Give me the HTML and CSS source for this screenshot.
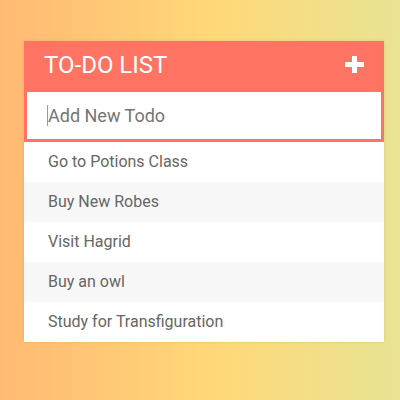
FILE: index.html
```html
<!DOCTYPE html>
<html>
<head>
<meta charset="utf-8">
<link rel="stylesheet" href="styles.css">
</head>
<body>
<div class="container">
  <h1 class="title">To-Do List
    <svg class="plus" width="19" height="17" viewBox="0 0 19 17"><rect x="7" y="0" width="5" height="17" fill="#fff"/><rect x="0" y="6" width="19" height="5" fill="#fff"/></svg>
  </h1>
  <div class="input-wrap"><span class="caret"></span><span class="placeholder">Add New Todo</span></div>
  <ul class="list">
    <li class="item">Go to Potions Class</li>
    <li class="item">Buy New Robes</li>
    <li class="item">Visit Hagrid</li>
    <li class="item">Buy an owl</li>
    <li class="item">Study for Transfiguration</li>
  </ul>
</div>
</body>
</html>
```
FILE: styles.css
```css
html, body { margin: 0; padding: 0; }
body {
  width: 400px;
  height: 400px;
  background: linear-gradient(to right, #ffb973 0%, #ffd979 55%, #e8e394 100%);
  font-family: Roboto, "Liberation Sans", sans-serif;
  padding-top: 41px;
  box-sizing: border-box;
}
.container {
  width: 360px;
  margin: 0 0 0 24px;
  background: #f7f7f7;
  box-shadow: 0 0 3px rgba(0,0,0,0.1);
}
.title {
  margin: 0;
  height: 48px;
  background: #ff7363;
  color: #fff;
  font-size: 24px;
  font-weight: 400;
  text-transform: uppercase;
  padding: 0 20px;
  display: flex;
  align-items: center;
  justify-content: space-between;
}
.plus { display: block; margin-top: -2px; }
.input-wrap {
  height: 53px;
  box-sizing: border-box;
  border: 3px solid #ff7363;
  background: #fff;
  display: flex;
  align-items: center;
  padding-left: 20px;
  font-size: 18px;
  color: #757575;
}
.caret {
  width: 1px;
  height: 21px;
  background: #ff7363;
  margin-right: 0px;
}
.list { list-style: none; margin: 0; padding: 0; }
.item {
  height: 40px;
  line-height: 40px;
  padding-left: 24px;
  background: #fff;
  color: #666;
  font-size: 16px;
}
.item:nth-child(2n) { background: #f7f7f7; }
```
